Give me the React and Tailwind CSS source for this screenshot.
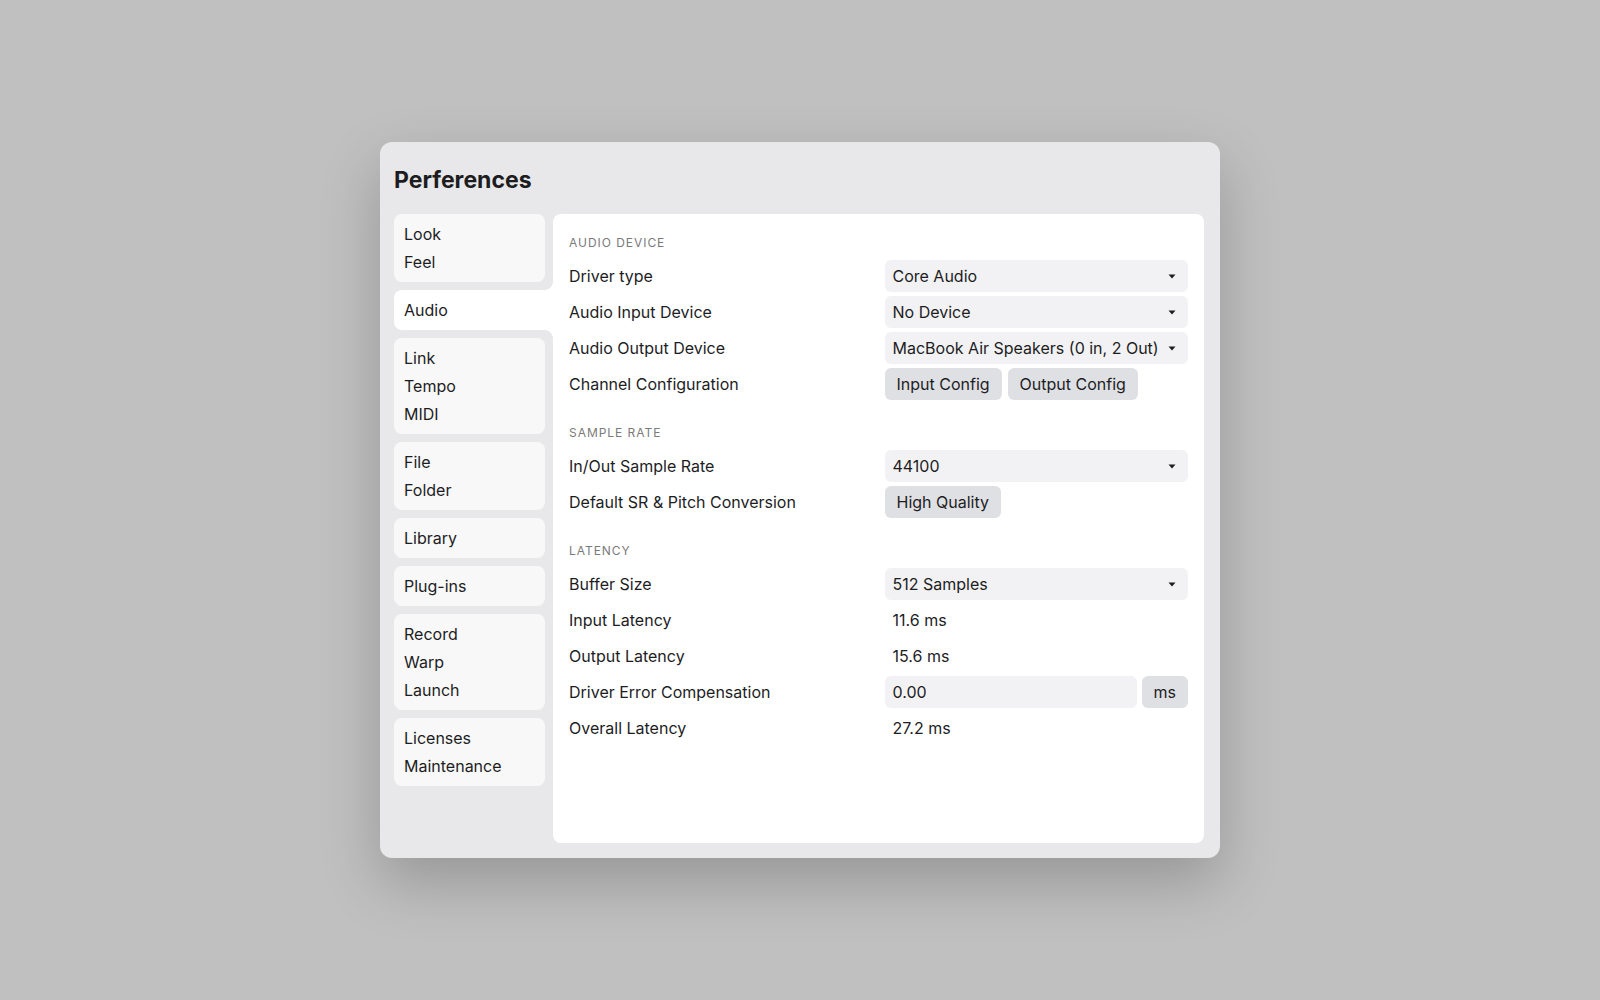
import { useState } from 'react';

const groups = [
    ['Look', 'Feel'],
    ['Audio'],
    ['Link', 'Tempo', 'MIDI'],
    ['File', 'Folder'],
    ['Library'],
    ['Plug-ins'],
    ['Record', 'Warp', 'Launch'],
    ['Licenses', 'Maintenance'],
];

const Caret = () => (
    <svg width="8" height="5" viewBox="0 0 8 5" className="shrink-0">
        <path d="M0.5 0.5h7L4 4.5z" fill="#1d1d1f" />
    </svg>
);

const Select = ({ value }) => (
    <div className="h-8 flex items-center justify-between bg-[#f2f2f4] rounded-md pl-2 pr-3 whitespace-nowrap">
        <span>{value}</span>
        <Caret />
    </div>
);

const Button = ({ children }) => (
    <button className="h-8 px-3 rounded-md bg-[#dfe0e4] text-[#1d1d1f]">{children}</button>
);

const Value = ({ children }) => <div className="h-8 flex items-center px-2">{children}</div>;

const Row = ({ label, children }) => (
    <>
        <div className="h-8 flex items-center">{label}</div>
        <div>{children}</div>
    </>
);

const Section = ({ title, children, first }) => (
    <div className={first ? '' : 'mt-[25px]'}>
        <h3 className="text-xs leading-4 tracking-[0.08em] uppercase text-[#7a7a7a] mb-[9px]">{title}</h3>
        <div className="grid grid-cols-2 gap-x-3 gap-y-1">{children}</div>
    </div>
);

const App = () => {
    const [active, setActive] = useState('Audio');

    return (
        <div
            className="min-h-screen bg-[#c0c0c0] flex items-center justify-center text-[#1d1d1f]"
            style={{ fontFamily: 'Inter, "Noto Sans", sans-serif' }}
        >
            <div className="w-[840px] h-[716px] bg-[#e8e8ea] rounded-xl shadow-[0_24px_60px_rgba(0,0,0,0.22)] flex flex-col pt-6 pl-[14px] pr-4 pb-[15px]">
                <h1 className="text-[23px] leading-7 font-bold mb-5">Perferences</h1>

                <div className="flex gap-2 flex-1 min-h-0">
                    {/* sidebar */}
                    <div className="w-[151px] flex flex-col gap-2">
                        {groups.map((items) => {
                            const selected = items.includes(active);
                            if (selected) {
                                return (
                                    <div key={items[0]} className="relative -mr-2 bg-white rounded-l-lg py-1.5 px-2.5">
                                        <div className="absolute right-0 -top-2 w-2 h-2 bg-[radial-gradient(circle_at_top_left,transparent_7.5px,white_8px)]" />
                                        <div className="absolute right-0 -bottom-2 w-2 h-2 bg-[radial-gradient(circle_at_bottom_left,transparent_7.5px,white_8px)]" />
                                        {items.map((item) => (
                                            <div key={item} className="h-7 flex items-center">{item}</div>
                                        ))}
                                    </div>
                                );
                            }
                            return (
                                <div key={items[0]} className="bg-[#f8f8f8] rounded-lg py-1.5 px-2.5">
                                    {items.map((item) => (
                                        <div
                                            key={item}
                                            onClick={() => setActive(item)}
                                            className="h-7 flex items-center cursor-default"
                                        >
                                            {item}
                                        </div>
                                    ))}
                                </div>
                            );
                        })}
                    </div>

                    {/* main panel */}
                    <div className="flex-1 bg-white rounded-lg pt-[21px] px-4">
                        <Section title="Audio Device" first>
                            <Row label="Driver type"><Select value="Core Audio" /></Row>
                            <Row label="Audio Input Device"><Select value="No Device" /></Row>
                            <Row label="Audio Output Device"><Select value="MacBook Air Speakers (0 in, 2 Out)" /></Row>
                            <Row label="Channel Configuration">
                                <div className="flex gap-1.5">
                                    <Button>Input Config</Button>
                                    <Button>Output Config</Button>
                                </div>
                            </Row>
                        </Section>

                        <Section title="Sample Rate">
                            <Row label="In/Out Sample Rate"><Select value="44100" /></Row>
                            <Row label="Default SR & Pitch Conversion">
                                <div className="flex"><Button>High Quality</Button></div>
                            </Row>
                        </Section>

                        <Section title="Latency">
                            <Row label="Buffer Size"><Select value="512 Samples" /></Row>
                            <Row label="Input Latency"><Value>11.6 ms</Value></Row>
                            <Row label="Output Latency"><Value>15.6 ms</Value></Row>
                            <Row label="Driver Error Compensation">
                                <div className="flex gap-[5px]">
                                    <input
                                        defaultValue="0.00"
                                        className="h-8 flex-1 min-w-0 bg-[#f2f2f4] rounded-md px-2 outline-none"
                                    />
                                    <Button>ms</Button>
                                </div>
                            </Row>
                            <Row label="Overall Latency"><Value>27.2 ms</Value></Row>
                        </Section>
                    </div>
                </div>
            </div>
        </div>
    );
};

export default App;
